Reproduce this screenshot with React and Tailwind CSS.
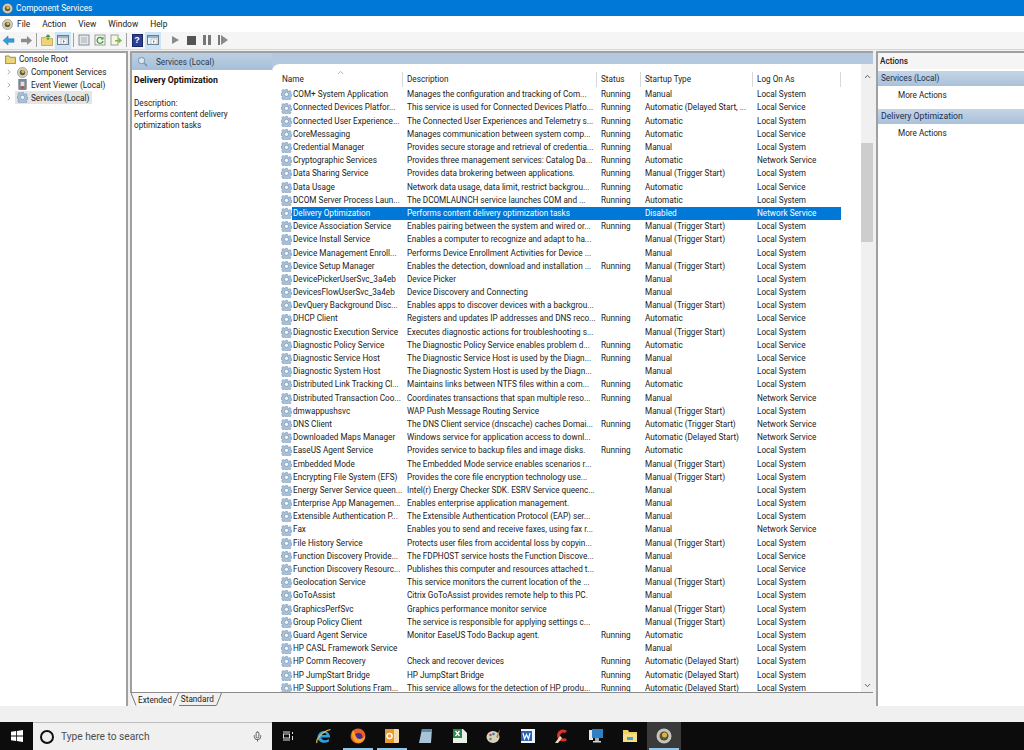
import React from 'react';
import { ChevronRight, ChevronUp, ChevronDown, Mic } from 'lucide-react';

const rows = [
  ['COM+ System Application', 'Manages the configuration and tracking of Com...', 'Running', 'Manual', 'Local System'],
  ['Connected Devices Platfor...', 'This service is used for Connected Devices Platfo...', 'Running', 'Automatic (Delayed Start, ...', 'Local Service'],
  ['Connected User Experience...', 'The Connected User Experiences and Telemetry s...', 'Running', 'Automatic', 'Local System'],
  ['CoreMessaging', 'Manages communication between system comp...', 'Running', 'Automatic', 'Local Service'],
  ['Credential Manager', 'Provides secure storage and retrieval of credentia...', 'Running', 'Manual', 'Local System'],
  ['Cryptographic Services', 'Provides three management services: Catalog Da...', 'Running', 'Automatic', 'Network Service'],
  ['Data Sharing Service', 'Provides data brokering between applications.', 'Running', 'Manual (Trigger Start)', 'Local System'],
  ['Data Usage', 'Network data usage, data limit, restrict backgrou...', 'Running', 'Automatic', 'Local Service'],
  ['DCOM Server Process Laun...', 'The DCOMLAUNCH service launches COM and ...', 'Running', 'Automatic', 'Local System'],
  ['Delivery Optimization', 'Performs content delivery optimization tasks', '', 'Disabled', 'Network Service'],
  ['Device Association Service', 'Enables pairing between the system and wired or...', 'Running', 'Manual (Trigger Start)', 'Local System'],
  ['Device Install Service', 'Enables a computer to recognize and adapt to ha...', '', 'Manual (Trigger Start)', 'Local System'],
  ['Device Management Enroll...', 'Performs Device Enrollment Activities for Device ...', '', 'Manual', 'Local System'],
  ['Device Setup Manager', 'Enables the detection, download and installation ...', 'Running', 'Manual (Trigger Start)', 'Local System'],
  ['DevicePickerUserSvc_3a4eb', 'Device Picker', '', 'Manual', 'Local System'],
  ['DevicesFlowUserSvc_3a4eb', 'Device Discovery and Connecting', '', 'Manual', 'Local System'],
  ['DevQuery Background Disc...', 'Enables apps to discover devices with a backgrou...', '', 'Manual (Trigger Start)', 'Local System'],
  ['DHCP Client', 'Registers and updates IP addresses and DNS reco...', 'Running', 'Automatic', 'Local Service'],
  ['Diagnostic Execution Service', 'Executes diagnostic actions for troubleshooting s...', '', 'Manual (Trigger Start)', 'Local System'],
  ['Diagnostic Policy Service', 'The Diagnostic Policy Service enables problem d...', 'Running', 'Automatic', 'Local Service'],
  ['Diagnostic Service Host', 'The Diagnostic Service Host is used by the Diagn...', 'Running', 'Manual', 'Local Service'],
  ['Diagnostic System Host', 'The Diagnostic System Host is used by the Diagn...', '', 'Manual', 'Local System'],
  ['Distributed Link Tracking Cl...', 'Maintains links between NTFS files within a com...', 'Running', 'Automatic', 'Local System'],
  ['Distributed Transaction Coo...', 'Coordinates transactions that span multiple reso...', 'Running', 'Manual', 'Network Service'],
  ['dmwappushsvc', 'WAP Push Message Routing Service', '', 'Manual (Trigger Start)', 'Local System'],
  ['DNS Client', 'The DNS Client service (dnscache) caches Domai...', 'Running', 'Automatic (Trigger Start)', 'Network Service'],
  ['Downloaded Maps Manager', 'Windows service for application access to downl...', '', 'Automatic (Delayed Start)', 'Network Service'],
  ['EaseUS Agent Service', 'Provides service to backup files and image disks.', 'Running', 'Automatic', 'Local System'],
  ['Embedded Mode', 'The Embedded Mode service enables scenarios r...', '', 'Manual (Trigger Start)', 'Local System'],
  ['Encrypting File System (EFS)', 'Provides the core file encryption technology use...', '', 'Manual (Trigger Start)', 'Local System'],
  ['Energy Server Service queen...', 'Intel(r) Energy Checker SDK. ESRV Service queenc...', '', 'Manual', 'Local System'],
  ['Enterprise App Managemen...', 'Enables enterprise application management.', '', 'Manual', 'Local System'],
  ['Extensible Authentication P...', 'The Extensible Authentication Protocol (EAP) ser...', '', 'Manual', 'Local System'],
  ['Fax', 'Enables you to send and receive faxes, using fax r...', '', 'Manual', 'Network Service'],
  ['File History Service', 'Protects user files from accidental loss by copyin...', '', 'Manual (Trigger Start)', 'Local System'],
  ['Function Discovery Provide...', 'The FDPHOST service hosts the Function Discove...', '', 'Manual', 'Local Service'],
  ['Function Discovery Resourc...', 'Publishes this computer and resources attached t...', '', 'Manual', 'Local Service'],
  ['Geolocation Service', 'This service monitors the current location of the ...', '', 'Manual (Trigger Start)', 'Local System'],
  ['GoToAssist', 'Citrix GoToAssist provides remote help to this PC.', '', 'Manual', 'Local System'],
  ['GraphicsPerfSvc', 'Graphics performance monitor service', '', 'Manual (Trigger Start)', 'Local System'],
  ['Group Policy Client', 'The service is responsible for applying settings c...', '', 'Manual (Trigger Start)', 'Local System'],
  ['Guard Agent Service', 'Monitor EaseUS Todo Backup agent.', 'Running', 'Automatic', 'Local System'],
  ['HP CASL Framework Service', '', '', 'Manual', 'Local System'],
  ['HP Comm Recovery', 'Check and recover devices', 'Running', 'Automatic (Delayed Start)', 'Local System'],
  ['HP JumpStart Bridge', 'HP JumpStart Bridge', 'Running', 'Automatic (Delayed Start)', 'Local System'],
  ['HP Support Solutions Fram...', 'This service allows for the detection of HP produ...', 'Running', 'Automatic (Delayed Start)', 'Local System'],
];

// service gear used in the list and the tree
const Gear = () => (
  <svg viewBox="0 0 12 12" className="w-[11px] h-[11px] shrink-0">
    <path d="M5 .5h2l.3 1.500 1.200.5 1.300-.8 1.400 1.400-.9 1.300.5 1.200 1.200.3v2l-1.500.3-.5 1.200.9 1.300-1.400 1.400-1.300-.9-1.200.5-.3 1.100H5l-.3-1.300-1.200-.5-1.300.9L.8 9.500l.9-1.300-.5-1.200L0 6.700v-2l1.200-.3.500-1.200-.9-1.300L2.200.5l1.300.9 1.200-.5z" fill="#a9c2da" stroke="#6a8cae" strokeWidth=".6" />
    <circle cx="6" cy="5.800" r="2.300" fill="#f4f8fb" stroke="#6d8fb0" strokeWidth=".7" />
  </svg>
);

const ConsoleIcon = () => (
  <svg viewBox="0 0 12 12" className="w-[11px] h-[11px] shrink-0">
    <circle cx="6" cy="6" r="5.500" fill="#d6d3c4" stroke="#6f6f66" strokeWidth=".6" />
    <circle cx="6" cy="6" r="3" fill="#5d5a4c" />
    <circle cx="6.500" cy="5" r="1.800" fill="#e0b93a" />
  </svg>
);

const ToolBtn = ({ active, children }) => (
  <div className={`w-4 h-[17px] flex items-center justify-center ${active ? 'bg-[#cce4f7]' : ''}`}>{children}</div>
);

const Sep = () => <div className="w-px h-[14px] bg-[#a0a0a0] mx-[2px]" />;

const PaneIcon = ({ fill }) => (
  <svg viewBox="0 0 12 12" className="w-3 h-3">
    <rect x=".5" y="1.500" width="11" height="9" fill="#eef2f5" stroke="#6c7a88" />
    <rect x="1" y="2" width="10" height="2" fill="#9fb3c6" />
    <rect x="4" y="5" width="6" height="5" fill="#fff" stroke="#8a98a6" strokeWidth=".5" />
    <path d="M6 6v3l2-1.500z" fill={fill} />
  </svg>
);

const Toolbar = () => (
  <div className="h-[19px] flex items-center bg-[#f5f5f5] border-b border-[#d8d8d8]">
    <ToolBtn>
      <svg viewBox="0 0 14 12" className="w-[13px] h-[11px]"><path d="M1 6l5.500-5v3H13v4H6.500v3z" fill="#2f9fdc" stroke="#1d77ac" strokeWidth=".5" /></svg>
    </ToolBtn>
    <div className="w-[2px]" />
    <ToolBtn>
      <svg viewBox="0 0 14 12" className="w-[13px] h-[11px]"><path d="M13 6L7.500 1v3H1v4h6.500v3z" fill="#8d8d8d" /></svg>
    </ToolBtn>
    <Sep />
    <ToolBtn>
      <svg viewBox="0 0 12 12" className="w-3 h-3"><path d="M.5 3.500h4l1 1h6v7H.5z" fill="#ecd477" stroke="#a98e33" strokeWidth=".6" /><path d="M7 6V1.500M5 3l2-2 2 2" stroke="#3f9c35" fill="none" strokeWidth="1.200" /></svg>
    </ToolBtn>
    <ToolBtn active><PaneIcon fill="#3f7fb5" /></ToolBtn>
    <Sep />
    <ToolBtn>
      <svg viewBox="0 0 12 12" className="w-3 h-3"><rect x="1" y="1" width="10" height="10" fill="#e4e7ea" stroke="#868e96" /><rect x="3" y="3" width="6" height="6" fill="#c6ccd2" /></svg>
    </ToolBtn>
    <ToolBtn>
      <svg viewBox="0 0 12 12" className="w-3 h-3"><rect x="1" y="1" width="10" height="10" fill="#f1f4f1" stroke="#98a198" /><path d="M8.500 4.500A3 3 0 1 0 9 7" fill="none" stroke="#3f9c35" strokeWidth="1.300" /><path d="M9.500 2.500v3h-3z" fill="#3f9c35" /></svg>
    </ToolBtn>
    <ToolBtn>
      <svg viewBox="0 0 12 12" className="w-3 h-3"><rect x="1" y="1" width="7" height="10" fill="#f5f5e8" stroke="#98a198" /><path d="M5 6h3.500V3.500L12 6.500 8.500 9.500V7.500H5z" fill="#7dbb3a" /></svg>
    </ToolBtn>
    <Sep />
    <ToolBtn>
      <div className="w-[11px] h-[13px] bg-[#2b3f96] border border-[#1a2766] text-white text-[9px] leading-[11px] text-center font-bold font-['Liberation_Sans',sans-serif]">?</div>
    </ToolBtn>
    <ToolBtn active><PaneIcon fill="#5aa04a" /></ToolBtn>
    <div className="w-[6px]" />
    <ToolBtn><div className="w-0 h-0 border-y-[4.500px] border-y-transparent border-l-[7px] border-l-[#8a8a8a]" /></ToolBtn>
    <ToolBtn><div className="w-[9px] h-[9px] bg-[#555]" /></ToolBtn>
    <ToolBtn>
      <div className="flex gap-[2px]"><div className="w-[3px] h-[10px] bg-[#777]" /><div className="w-[3px] h-[10px] bg-[#777]" /></div>
    </ToolBtn>
    <ToolBtn>
      <div className="flex gap-[1px] items-center"><div className="w-[2px] h-[10px] bg-[#777]" /><div className="w-0 h-0 border-y-[5px] border-y-transparent border-l-[7px] border-l-[#8a8a8a]" /></div>
    </ToolBtn>
  </div>
);

const TreeRow = ({ icon, label, selected }) => (
  <div className="flex items-center h-[12.700px] pl-[5px]">
    <ChevronRight className="w-[8px] h-[8px] text-[#8a8a8a]" strokeWidth={2} />
    <div className={`flex items-center gap-[3px] ml-[2px] pl-[2px] pr-[3px] h-[12.700px] ${selected ? 'bg-[#e5e5e5]' : ''}`}>
      {icon}
      <span>{label}</span>
    </div>
  </div>
);

const Cell = ({ children, className = '' }) => (
  <div className={`pl-1 overflow-hidden whitespace-nowrap ${className}`}>{children}</div>
);

const Row = ({ r }) => {
  const sel = r[0] === 'Delivery Optimization';
  return (
    <div className="grid grid-cols-[131px_194px_44px_112px_88px] h-[13.200px] leading-[13.200px] w-[569px]">
      <div className="flex items-center pl-[9px] overflow-hidden whitespace-nowrap">
        <Gear />
        <span className={`pl-[1px] flex-1 ${sel ? 'bg-[#0078d7] text-white' : ''}`}>{r[0]}</span>
      </div>
      {[r[1], r[2], r[3], r[4]].map((t, i) => (
        <Cell key={i} className={sel ? 'bg-[#0078d7] text-white' : ''}>{t}</Cell>
      ))}
    </div>
  );
};

const Head = ({ children, className = '' }) => (
  <div className={`relative pl-1 border-r border-[#d8d8d8] h-[15px] leading-[15px] ${className}`}>{children}</div>
);

const TaskIcon = ({ children, active, running }) => (
  <div className={`relative w-[34px] h-[28px] flex items-center justify-center ${active ? 'bg-[#3a3a3a]' : ''}`}>
    {children}
    {running && <div className="absolute bottom-0 left-[2px] right-[2px] h-[2px] bg-[#8fc6ee]" />}
  </div>
);

export default function App() {
  return (
    <div className="w-[1024px] h-[750px] overflow-hidden flex flex-col bg-[#f0f0f0] text-[#222] text-[8.200px] font-['Roboto',sans-serif]">
      {/* title bar */}
      <div className="h-4 bg-[#0078d7] text-white flex items-center pl-[2px] gap-[3px] text-[8.300px] pt-[1px]">
        <ConsoleIcon />
        <span>Component Services</span>
      </div>

      {/* menu */}
      <div className="h-4 bg-white flex items-center pl-[2px] pt-[1px]">
        <ConsoleIcon />
        <div className="flex ml-[4px] gap-[12px] text-[8.400px]">
          <span>File</span>
          <span>Action</span>
          <span>View</span>
          <span>Window</span>
          <span>Help</span>
        </div>
      </div>

      <Toolbar />

      {/* main panes */}
      <div className="h-[655px] mt-[1px] flex">
        {/* tree */}
        <div className="w-[128px] bg-white border-t-2 border-r-2 border-[#a0a0a0] shrink-0">
          <div className="flex items-center h-[12.700px] pl-[5px] gap-[3px]">
            <svg viewBox="0 0 12 10" className="w-[11px] h-[9px]"><path d="M.5 1h4l1 1.500h6v7H.5z" fill="#ecd477" stroke="#6b5f2a" strokeWidth=".7" /></svg>
            <span>Console Root</span>
          </div>
          <TreeRow icon={<ConsoleIcon />} label="Component Services" />
          <TreeRow
            icon={
              <svg viewBox="0 0 12 12" className="w-[11px] h-[11px]"><rect x="2" y=".5" width="8" height="11" fill="#7c8aa0" stroke="#4a5566" strokeWidth=".6" /><rect x="4" y="3" width="4" height="5" fill="#e6e0c8" /><circle cx="6" cy="9" r="1.500" fill="#c9433b" /></svg>
            }
            label="Event Viewer (Local)"
          />
          <TreeRow icon={<Gear />} label="Services (Local)" selected />
        </div>

        <div className="w-[2px] shrink-0" />

        {/* services */}
        <div className="w-[743px] shrink-0 flex border-t-2 border-l-2 border-[#a0a0a0] relative">
          <div className="w-[140px] shrink-0 bg-white">
            <div className="h-[17px] bg-gradient-to-b from-[#bcd0e4] to-[#a6bfd9] flex items-center pl-[5px] gap-[8px]">
              <svg viewBox="0 0 12 12" className="w-[11px] h-[11px]"><circle cx="5" cy="5" r="3.500" fill="#d7e5f1" stroke="#6e8fb0" /><path d="M8 8l3 3" stroke="#6e8fb0" strokeWidth="1.500" /></svg>
              <span className="text-[#2a3a4d]">Services (Local)</span>
            </div>
            <div className="pl-[2px] pt-[5px] leading-[11px]">
              <div className="font-bold text-[8.700px] text-[#111]">Delivery Optimization</div>
              <div className="mt-[12px]">Description:</div>
              <div>Performs content delivery</div>
              <div>optimization tasks</div>
            </div>
          </div>

          <div className="flex-1 flex flex-col bg-gradient-to-b from-[#b4c9df] to-[#a8c0da] pt-[11px]">
            <div className="flex-1 flex bg-white rounded-tl-[8px] overflow-hidden">
              <div className="flex-1">
                <div className="grid grid-cols-[131px_194px_44px_112px_88px] pt-[8px] h-[24px] w-[569px]">
                  <Head className="pl-[10px]">
                    Name
                    <ChevronUp className="absolute left-[64px] -top-[4px] w-[9px] h-[9px] text-[#777]" strokeWidth={1.500} />
                  </Head>
                  <Head>Description</Head>
                  <Head>Status</Head>
                  <Head>Startup Type</Head>
                  <Head>Log On As</Head>
                </div>
                {rows.map((r) => <Row key={r[0]} r={r} />)}
              </div>

              {/* scrollbar */}
              <div className="w-[12px] bg-[#f0f0f0] flex flex-col items-center">
                <ChevronUp className="w-[9px] h-[9px] mt-[8px] text-[#555]" strokeWidth={2.500} />
                <div className="w-full h-[99px] mt-[62px] bg-[#cdcdcd]" />
                <div className="flex-1" />
                <ChevronDown className="w-[9px] h-[9px] mb-[2px] text-[#555]" strokeWidth={2.500} />
              </div>
            </div>

            <div className="h-[14px] -ml-[142px] shrink-0 bg-[#f0f0f0] border-t border-[#8c8c8c] flex items-start pl-[1px]">
              <div className="flex items-center h-[13px] bg-[#f5f5f5]">
                <svg viewBox="0 0 6 13" className="w-[6px] h-[13px]"><path d="M0 0l5 12.500" stroke="#777" fill="none" /></svg>
                <span className="px-[1px]">Extended</span>
                <svg viewBox="0 0 6 13" className="w-[6px] h-[13px]"><path d="M5.500 0L.5 12.500" stroke="#777" fill="none" /></svg>
              </div>
              <div className="flex items-center h-[13px]">
                <span className="px-[2px] border-b border-[#777] leading-[12px]">Standard</span>
                <svg viewBox="0 0 6 13" className="w-[6px] h-[13px]"><path d="M5.500 0L.5 12.500" stroke="#777" fill="none" /></svg>
              </div>
            </div>
          </div>
        </div>

        <div className="w-[3px] shrink-0" />

        {/* actions */}
        <div className="flex-1 bg-white border-t-2 border-l-2 border-[#a0a0a0]">
          <div className="h-[16px] leading-[16px] pl-[2px] font-medium bg-[#f5f5f5]">Actions</div>
          <div className="h-[15px] leading-[15px] mt-[2px] pl-[3px] text-[#1d2f4f] bg-gradient-to-b from-[#c5d5e6] to-[#a9c1d9]">Services (Local)</div>
          <div className="h-[22px] leading-[18px] pl-[20px]">More Actions</div>
          <div className="h-[15px] leading-[15px] mt-[1px] pl-[3px] text-[8.700px] text-[#1d2f4f] bg-gradient-to-b from-[#c5d5e6] to-[#a9c1d9]">Delivery Optimization</div>
          <div className="h-[22px] leading-[18px] pl-[20px]">More Actions</div>
        </div>
      </div>

      <div className="h-[16px] bg-[#f0f0f0]" />

      {/* taskbar */}
      <div className="h-[28px] bg-[#0c0c0c] flex items-center">
        <div className="w-[33px] flex justify-center">
          <svg viewBox="0 0 12 12" className="w-[12px] h-[12px]"><path d="M0 1.800l5-.7v4.500H0zM5.800 1l6.200-1v5.600H5.800zM0 6.400h5v4.500l-5-.7zM5.800 6.400H12V12l-6.200-1z" fill="#fff" /></svg>
        </div>
        <div className="w-[239px] h-[28px] bg-[#f0f0f0] border-t border-[#bdbdbd] flex items-center pl-[7px] pr-[9px] text-[10.200px] text-[#4d4d4d]">
          <div className="w-[14px] h-[14px] rounded-full border-2 border-[#111]" />
          <span className="ml-[7px] flex-1">Type here to search</span>
          <Mic className="w-[11px] h-[11px] text-[#555]" />
        </div>
        <div className="ml-[1px] flex">
          <TaskIcon>
            <svg viewBox="0 0 12 12" className="w-[12px] h-[12px] -ml-[4px]"><path d="M1 2h7M1 10h7" stroke="#ddd" /><rect x="1.500" y="4" width="6" height="4" fill="none" stroke="#ddd" /><path d="M10.500 2v2M10.500 6v4" stroke="#ddd" /></svg>
          </TaskIcon>
          <TaskIcon>
            <svg viewBox="0 0 18 18" className="w-[18px] h-[18px]"><path d="M2.500 10a6.300 6.300 0 1 1 12.600.6H6.300c.3 3 4.500 3.600 7.500 1.500v2.700c-4.600 2.200-11.300.8-11.300-4.800zM6.300 8h5.300c-.2-2.800-4.900-2.800-5.300 0z" fill="#2f9fe0" /><path d="M2 16C.5 13 6 5 15.500 2.500" stroke="#f0c23c" fill="none" strokeWidth="1.200" /></svg>
          </TaskIcon>
          <TaskIcon running>
            <svg viewBox="0 0 16 16" className="w-[16px] h-[16px]"><circle cx="8" cy="8" r="7.500" fill="#e8622b" /><circle cx="8.500" cy="9" r="4" fill="#4b2a8c" /><path d="M3 2c-2 4-1 11 5 13 4 0 7-3 7-7-2 3-6 4-8 2S5 5 3 2z" fill="#f5a623" /></svg>
          </TaskIcon>
          <TaskIcon running>
            <svg viewBox="0 0 16 16" className="w-[16px] h-[16px]"><rect x="1" y="1" width="14" height="14" rx="1" fill="#f4d9a8" /><rect x="1" y="1" width="9" height="14" fill="#ea9a2c" /><circle cx="5.500" cy="8" r="2.500" fill="none" stroke="#fff" strokeWidth="1.500" /></svg>
          </TaskIcon>
          <TaskIcon>
            <svg viewBox="0 0 16 16" className="w-[16px] h-[16px]"><path d="M4 1h10l-1 14H1z" fill="#a9c4d6" /><path d="M4 1h10l-.3 3H3.500z" fill="#5d8aa8" /></svg>
          </TaskIcon>
          <TaskIcon>
            <svg viewBox="0 0 16 16" className="w-[16px] h-[16px]"><path d="M1 1h10l4 4v10H1z" fill="#e8f2e6" /><rect x="1" y="1" width="9" height="9" fill="#2c8a4a" /><path d="M3.500 3l4 5M7.500 3l-4 5" stroke="#fff" strokeWidth="1.300" /></svg>
          </TaskIcon>
          <TaskIcon>
            <svg viewBox="0 0 16 16" className="w-[16px] h-[16px]"><ellipse cx="7" cy="9" rx="6.500" ry="6" fill="#d9d2bf" /><circle cx="4.500" cy="7" r="1.300" fill="#d24b3e" /><circle cx="7.500" cy="6" r="1.300" fill="#3d79c2" /><circle cx="4.500" cy="11" r="1.300" fill="#4aa250" /><path d="M14 1l-4 8 2 1z" fill="#a78a55" /></svg>
          </TaskIcon>
          <TaskIcon>
            <svg viewBox="0 0 16 16" className="w-[16px] h-[16px]"><rect x="1" y="1" width="14" height="14" fill="#eef3fa" /><rect x="1" y="3" width="11" height="10" fill="#2a62b8" /><path d="M3 5l1.500 6L6.500 6.500 8.500 11 10 5" stroke="#fff" fill="none" strokeWidth="1.200" /></svg>
          </TaskIcon>
          <TaskIcon>
            <svg viewBox="0 0 16 16" className="w-[16px] h-[16px]"><path d="M13 3A6 6 0 1 0 13 12L11 10A3 3 0 1 1 11 5z" fill="#d5362e" /><path d="M1 15l5-7 2 2-4 5z" fill="#e8dcc0" /></svg>
          </TaskIcon>
          <TaskIcon>
            <svg viewBox="0 0 16 16" className="w-[16px] h-[16px]"><rect x="1" y="2" width="4" height="10" fill="#dfe8ee" /><rect x="4" y="1" width="11" height="9" fill="#2f7fc4" /><rect x="7" y="10" width="4" height="3" fill="#9ab" /><rect x="5" y="13" width="8" height="1.500" fill="#cfd8de" /></svg>
          </TaskIcon>
          <TaskIcon>
            <svg viewBox="0 0 16 16" className="w-[16px] h-[16px]"><path d="M1 2h5l1 2h8v10H1z" fill="#f2cf63" /><rect x="1" y="6" width="14" height="8" fill="#f6dc85" /><rect x="5" y="9" width="6" height="3" fill="#3fa2d8" /></svg>
          </TaskIcon>
          <TaskIcon active running>
            <svg viewBox="0 0 16 16" className="w-[16px] h-[16px]"><circle cx="8" cy="8" r="7.500" fill="#c8c5b8" /><circle cx="8" cy="8" r="4.500" fill="#55523f" /><circle cx="8.500" cy="7" r="2.500" fill="#dcb43a" /></svg>
          </TaskIcon>
        </div>
      </div>
    </div>
  );
}
